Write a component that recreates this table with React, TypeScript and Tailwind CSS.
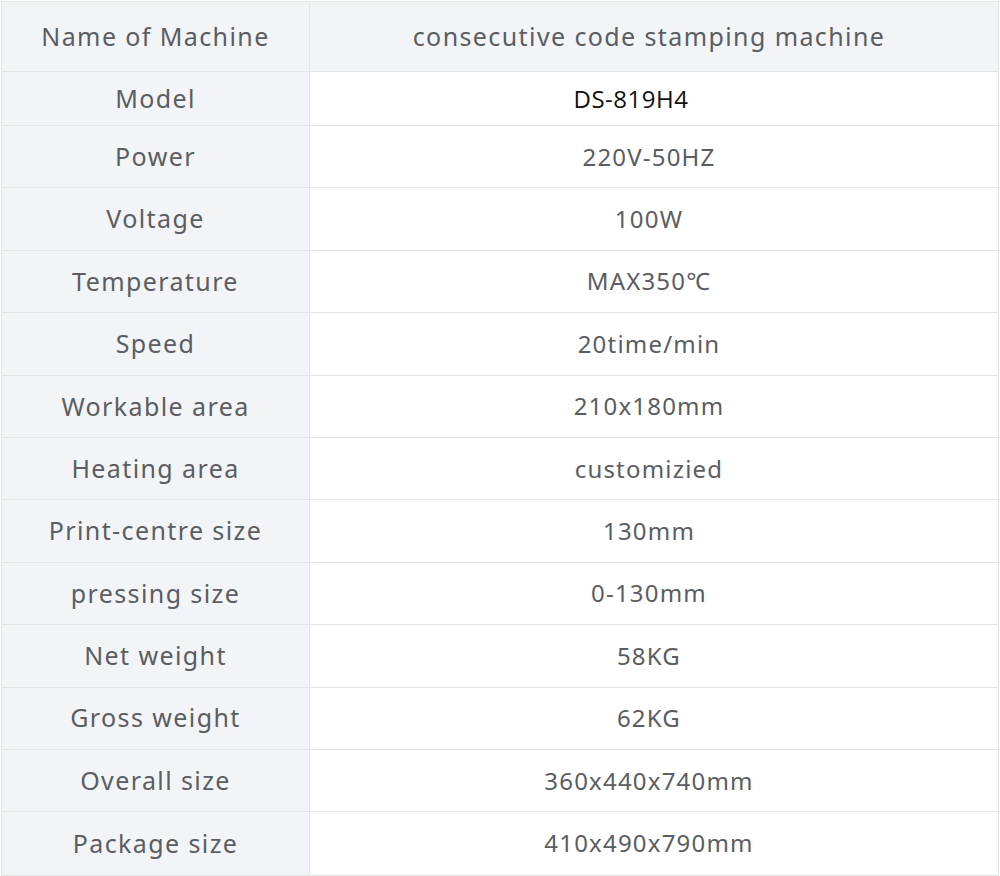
const rows: [string, string][] = [
  ['Model', 'DS-819H4'],
  ['Power', '220V-50HZ'],
  ['Voltage', '100W'],
  ['Temperature', 'MAX350℃'],
  ['Speed', '20time/min'],
  ['Workable area', '210x180mm'],
  ['Heating area', 'customizied'],
  ['Print-centre size', '130mm'],
  ['pressing size', '0-130mm'],
  ['Net weight', '58KG'],
  ['Gross weight', '62KG'],
  ['Overall size', '360x440x740mm'],
  ['Package size', '410x490x790mm'],
]

export default function App() {
  return (
    <div className="w-[1000px] h-[876px] bg-white pt-px pl-px" style={{ fontFamily: '"Noto Sans", "Open Sans", sans-serif' }}>
      <div className="w-[998px] border border-[#e3e4e8] grid grid-cols-[308px_1fr]">
        <div className="h-[70px] bg-[#f3f4f7] border-r border-b border-[#e3e4e8] flex items-center justify-center text-[25px] tracking-[1.4px] text-[#5a5d62]">
          Name of Machine
        </div>
        <div className="h-[70px] bg-[#f3f4f7] border-b border-[#e3e4e8] flex items-center justify-center text-[25px] tracking-[1.4px] text-[#5a5d62] pr-[10px]">
          consecutive code stamping machine
        </div>
        {rows.map(([label, value], i) => {
          const h = i === 0 ? 'h-[54px]' : 'h-[62.4px]'
          const last = i === rows.length - 1
          return (
            <div key={label} className="contents">
              <div className={`${h} bg-[#f3f4f7] border-r border-[#e3e4e8] ${last ? '' : 'border-b'} flex items-center justify-center text-[25px] tracking-[1.4px] text-[#5a5d62]`}>
                {label}
              </div>
              <div className={`${h} border-[#e3e4e8] ${last ? '' : 'border-b'} flex items-center justify-center ${i === 0 ? 'pr-[46px]' : 'pr-[10px]'}`}>
                {i === 0 ? (
                  <span className="text-[24px] tracking-[0.5px] text-[#111]" style={{ fontFamily: '"Open Sans", "Noto Sans", sans-serif' }}>{value}</span>
                ) : (
                  <span className="text-[24px] tracking-[1.2px] text-[#5a5d62]">{value}</span>
                )}
              </div>
            </div>
          )
        })}
      </div>
    </div>
  )
}
